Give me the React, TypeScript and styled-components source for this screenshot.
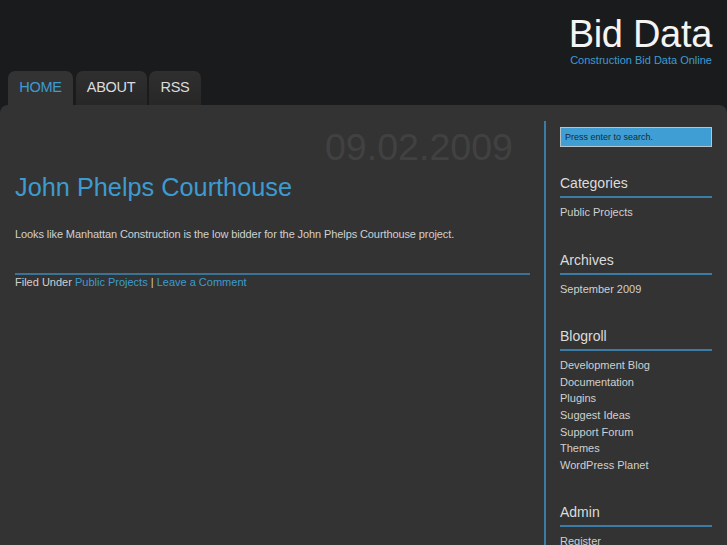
import React from "react";
import styled, { createGlobalStyle } from "styled-components";

const Global = createGlobalStyle`
  html, body { margin: 0; padding: 0; background: #1a1b1d; }
  body { font-family: "Liberation Sans", Arial, sans-serif; }
  a { text-decoration: none; }
`;

const Page = styled.div`
  width: 727px;
  height: 545px;
  overflow: hidden;
  background: #1a1b1d;
  display: flex;
  flex-direction: column;
`;

const Header = styled.header`
  flex-shrink: 0;
  height: 71px;
  display: flex;
  flex-direction: column;
  align-items: flex-end;
  padding-right: 15px;
  box-sizing: border-box;
`;

const SiteTitle = styled.h1`
  margin: 12px 0 0;
  font-size: 38px;
  line-height: 44px;
  font-weight: normal;
  color: #f4f4f4;
  letter-spacing: -0.3px;
`;

const Tagline = styled.div`
  font-size: 11px;
  line-height: 12px;
  color: #3d9bd0;
  margin-top: -2px;
`;

const Nav = styled.nav`
  flex-shrink: 0;
  display: flex;
  gap: 2.5px;
  padding-left: 8px;
  height: 34px;
`;

const Tab = styled.a<{ $active?: boolean; $w: number }>`
  width: ${(p) => p.$w}px;
  display: flex;
  align-items: center;
  justify-content: center;
  padding-bottom: 2px;
  box-sizing: border-box;
  border-radius: 7px 7px 0 0;
  font-size: 14.5px;
  letter-spacing: -0.3px;
  color: ${(p) => (p.$active ? "#3d9bd0" : "#dcdcdc")};
  background: ${(p) => (p.$active ? "#333333" : "linear-gradient(#2f2f2f, #272727)")};
`;

const Panel = styled.div`
  flex: 1;
  min-height: 0;
  overflow: hidden;
  background: #333333;
  border-radius: 8px 8px 0 0;
  display: grid;
  grid-template-columns: 515px 168px;
  align-items: start;
  column-gap: 14px;
  padding-left: 15px;
`;

const Main = styled.main`
  padding-top: 22px;
`;

const DateLine = styled.div`
  text-align: right;
  padding-right: 17px;
  font-size: 37.6px;
  line-height: 42px;
  color: #414141;
  margin-top: -1px;
`;

const PostTitle = styled.h2`
  margin: 4px 0 0;
  font-size: 25.3px;
  line-height: 30px;
  font-weight: normal;
  color: #3d9bd0;
`;

const Body = styled.p`
  margin: 25px 0 0;
  font-size: 11px;
  line-height: 14px;
  letter-spacing: -0.1px;
  color: #d0d0d0;
`;

const Meta = styled.div`
  margin-top: 32px;
  border-top: 2px solid #3a7396;
  font-size: 11px;
  line-height: 14px;
  color: #d0d0d0;
`;

const Link = styled.a`
  color: #3d9bd0;
`;

const Sidebar = styled.aside`
  margin-top: 16px;
  min-height: 600px;
  border-left: 2px solid #3a7ca5;
  padding-left: 14px;
  display: flex;
  flex-direction: column;
`;

const Search = styled.div`
  margin-top: 6px;
  height: 20px;
  box-sizing: border-box;
  border: 1px solid #b8c4cc;
  background: #3f9ed3;
  font-size: 9px;
  color: #1b2a33;
  padding-left: 4px;
  display: flex;
  align-items: center;
`;

const Widget = styled.section`
  margin-top: 27px;
  & + & { margin-top: 30px; }
`;

const WidgetTitle = styled.h3`
  margin: 0;
  font-size: 14px;
  line-height: 18px;
  font-weight: normal;
  color: #dcdcdc;
  padding-bottom: 4px;
  border-bottom: 2px solid #3a7ca5;
`;

const List = styled.ul`
  list-style: none;
  margin: 6px 0 0;
  padding: 0;
`;

const Item = styled.li`
  font-size: 11px;
  line-height: 16.6px;
  color: #d0d0d0;
`;

const widgets = [
  { title: "Categories", items: ["Public Projects"] },
  { title: "Archives", items: ["September 2009"] },
  {
    title: "Blogroll",
    items: [
      "Development Blog",
      "Documentation",
      "Plugins",
      "Suggest Ideas",
      "Support Forum",
      "Themes",
      "WordPress Planet",
    ],
  },
  { title: "Admin", items: ["Register"] },
];

export default function App() {
  return (
    <Page>
      <Global />
      <Header>
        <SiteTitle>Bid Data</SiteTitle>
        <Tagline>Construction Bid Data Online</Tagline>
      </Header>
      <Nav>
        <Tab $active $w={65}>HOME</Tab>
        <Tab $w={71}>ABOUT</Tab>
        <Tab $w={52}>RSS</Tab>
      </Nav>
      <Panel>
        <Main>
          <DateLine>09.02.2009</DateLine>
          <PostTitle>John Phelps Courthouse</PostTitle>
          <Body>
            Looks like Manhattan Construction is the low bidder for the John Phelps Courthouse project.
          </Body>
          <Meta>
            Filed Under <Link>Public Projects</Link> | <Link>Leave a Comment</Link>
          </Meta>
        </Main>
        <Sidebar>
          <Search>Press enter to search.</Search>
          {widgets.map((w) => (
            <Widget key={w.title}>
              <WidgetTitle>{w.title}</WidgetTitle>
              <List>
                {w.items.map((i) => (
                  <Item key={i}>{i}</Item>
                ))}
              </List>
            </Widget>
          ))}
        </Sidebar>
      </Panel>
    </Page>
  );
}
